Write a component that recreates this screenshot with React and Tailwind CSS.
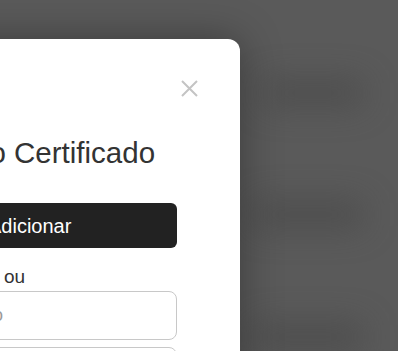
import React from 'react'

const App = () => {
    return (
        <div className='relative w-[398px] h-[351px] overflow-hidden bg-[#5a5a5a] font-["Liberation_Sans",Arial,sans-serif]'>
            {/* blurred page behind the overlay */}
            <div className="w-full h-full flex flex-col items-end pt-[80px] pr-[35px] gap-[95px] blur-[16px]">
                <div className="w-[100px] h-[26px] bg-[#404040] rounded opacity-50"></div>
                <div className="w-[110px] h-[28px] bg-[#404040] rounded opacity-50"></div>
                <div className="w-[110px] h-[28px] bg-[#404040] rounded opacity-50"></div>
            </div>

            <div className="absolute left-[-260px] top-[39px] w-[500px] h-[420px] bg-white rounded-xl shadow-[0_0_40px_rgba(0,0,0,0.35)]">
                <button className="absolute right-[42px] top-[41px] w-[17px] h-[17px] text-[#c4c4c4]">
                    <svg viewBox="0 0 17 17" width="17" height="17" fill="none" stroke="currentColor" strokeWidth="2">
                        <path d="M1 1 L16 16 M16 1 L1 16" />
                    </svg>
                </button>
                <div className="flex flex-col pl-[197px] pr-[63px] pt-[96px]">
                    <h2 className="text-[29.5px] leading-[36px] text-[#333]">Novo Certificado</h2>
                    <button className="mt-[32px] h-[45px] w-full rounded-md bg-[#222] text-white text-[20px] text-left pl-[51px]">
                        Adicionar
                    </button>
                    <p className="mt-[17px] text-[19px] leading-[24px] text-[#333] pl-[67px]">ou</p>
                    <input
                        type="text"
                        placeholder="Título"
                        className="mt-[2px] h-[49px] w-full rounded-lg border border-[#c8c8c8] pl-[20px] text-[18px] outline-none placeholder:text-[#9a9a9a]"
                    />
                    <input
                        type="text"
                        placeholder="Descrição"
                        className="mt-[7px] h-[49px] w-full rounded-lg border border-[#c8c8c8] pl-[20px] text-[18px] outline-none placeholder:text-[#9a9a9a]"
                    />
                </div>
            </div>
        </div>
    )
}

export default App
